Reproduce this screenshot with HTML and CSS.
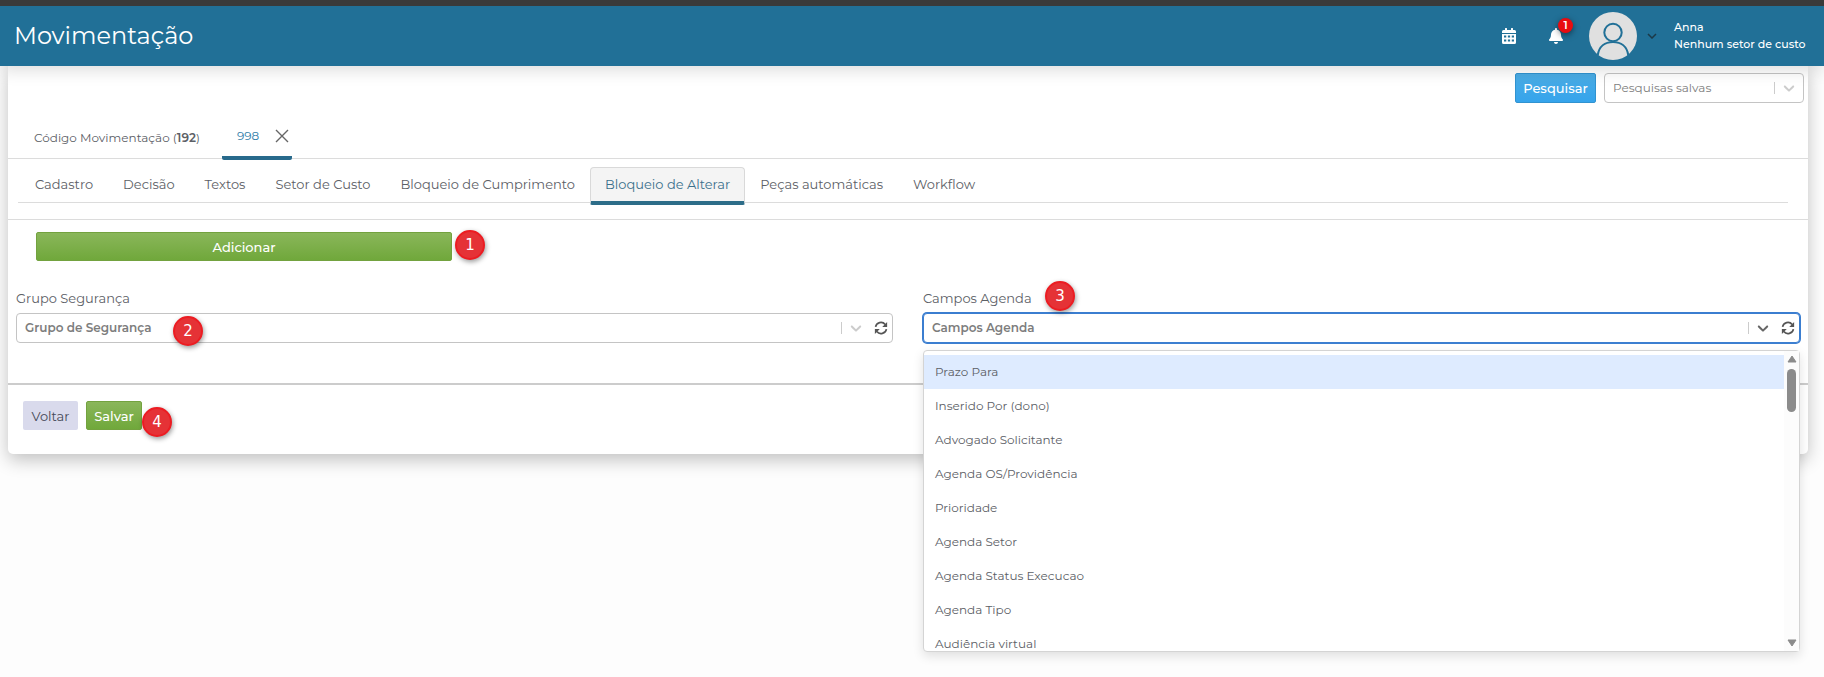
FILE: index.html
```html
<!DOCTYPE html>
<html lang="pt-BR">
<head>
<meta charset="utf-8">
<meta name="viewport" content="width=device-width, initial-scale=1">
<title>Movimentação</title>
<link rel="stylesheet" href="styles.css">
</head>
<body>
<svg class="sprite" aria-hidden="true">
  <symbol id="chevron" viewBox="0 0 20 20"><path d="M4.516 7.548c0.436-0.446 1.043-0.481 1.576 0l3.908 3.747 3.908-3.747c0.533-0.481 1.141-0.446 1.574 0 0.436 0.445 0.408 1.197 0 1.615-0.406 0.418-4.695 4.502-4.695 4.502-0.217 0.223-0.502 0.335-0.787 0.335s-0.57-0.112-0.789-0.335c0 0-4.287-4.084-4.695-4.502s-0.436-1.17 0-1.615z"/></symbol>
  <symbol id="refresh" viewBox="0 0 16 16"><path d="M1.800 6.800A6.200 6.200 0 0 1 12.800 4M14.200 9.200A6.200 6.200 0 0 1 3.200 12" fill="none" stroke="currentColor" stroke-width="1.900"/><path d="M15 1.200v5.600H9.400zM1 14.800V9.200h5.600z"/></symbol>
</svg>

<header class="topbar">
  <h1 class="title">Movimentação</h1>
  <div class="user-tools">
    <button class="icon-button" type="button" aria-label="Calendário">
      <svg width="14" height="16" viewBox="0 0 448 512"><path d="M0 192h448v272a48 48 0 0 1-48 48H48a48 48 0 0 1-48-48zM448 160H0v-48a48 48 0 0 1 48-48h48V16q0-16 16-16h32q16 0 16 16v48h128V16q0-16 16-16h32q16 0 16 16v48h48a48 48 0 0 1 48 48z"/><path class="cells" d="M64 240h72v64H64zM188 240h72v64h-72zM312 240h72v64h-72zM64 368h72v64H64zM188 368h72v64h-72zM312 368h72v64h-72z"/></svg>
    </button>
    <button class="icon-button bell" type="button" aria-label="Notificações">
      <svg width="14" height="16" viewBox="0 0 448 512"><path d="M224 512c35.320 0 63.970-28.650 63.970-64H160.030c0 35.350 28.650 64 63.970 64zm215.390-149.710c-19.320-20.760-55.470-51.990-55.470-154.290 0-77.700-54.480-139.900-127.940-155.160V32c0-17.670-14.320-32-31.980-32s-31.980 14.330-31.980 32v20.840C118.560 68.100 64.080 130.300 64.080 208c0 102.300-36.150 133.530-55.470 154.290-6 6.450-8.660 14.160-8.610 21.710.11 16.400 12.980 32 32.100 32h383.800c19.120 0 32-15.600 32.100-32 .05-7.550-2.610-15.270-8.610-21.710z"/></svg>
      <span class="count">1</span>
    </button>
    <button class="account" type="button" aria-label="Menu do usuário">
      <svg width="48" height="48" viewBox="0 0 48 48" fill="none"><circle cx="24" cy="24" r="24" fill="#e0e0e0"/><circle cx="24" cy="20.500" r="8.700" fill="none" stroke="#217097" stroke-width="2"/><path d="M8.800 43C10 34.500 16 30 24 30s14 4.500 15.200 13" fill="none" stroke="#217097" stroke-width="2"/></svg>
      <svg class="caret" width="10" height="6" viewBox="0 0 10 6"><path d="M1 1l4 4 4-4" fill="none" stroke="currentColor" stroke-width="1.500"/></svg>
    </button>
    <div class="who"><span>Anna</span><span>Nenhum setor de custo</span></div>
  </div>
</header>

<main class="card">
  <div class="search-bar">
    <button class="button primary" type="button">Pesquisar</button>
    <div class="picker saved">
      <select aria-label="Pesquisas salvas"><option>Pesquisas salvas</option></select>
      <span class="chevron"><svg width="18" height="18"><use href="#chevron"/></svg></span>
    </div>
  </div>

  <nav class="records">
    <a class="record" href="#lista">Código Movimentação (<b>192</b>)</a>
    <div class="record current">
      <a href="#998">998</a>
      <button class="close" type="button" aria-label="Fechar"><svg width="14" height="14" viewBox="0 0 14 14"><path d="M1 1l12 12M13 1L1 13" stroke="currentColor" stroke-width="1.400"/></svg></button>
    </div>
  </nav>

  <nav class="sections">
    <a href="#cadastro">Cadastro</a>
    <a href="#decisao">Decisão</a>
    <a href="#textos">Textos</a>
    <a href="#setor">Setor de Custo</a>
    <a href="#cumprimento">Bloqueio de Cumprimento</a>
    <a class="active" href="#alterar">Bloqueio de Alterar</a>
    <a href="#pecas">Peças automáticas</a>
    <a href="#workflow">Workflow</a>
  </nav>

  <form class="form">
    <div class="add-row">
      <button class="button success" type="button">Adicionar</button>
      <span class="step step-1">1</span>
    </div>
    <div class="fields">
      <div class="field">
        <label for="grupo">Grupo Segurança</label>
        <div class="picker">
          <select id="grupo"><option>Grupo de Segurança</option></select>
          <span class="chevron"><svg width="18" height="18"><use href="#chevron"/></svg></span>
          <button class="reload" type="button" aria-label="Atualizar grupos"><svg width="14" height="14"><use href="#refresh"/></svg></button>
        </div>
        <span class="step step-2">2</span>
      </div>
      <div class="field">
        <label for="campos">Campos Agenda</label>
        <div class="picker open">
          <select id="campos"><option>Campos Agenda</option></select>
          <span class="chevron"><svg width="18" height="18"><use href="#chevron"/></svg></span>
          <button class="reload" type="button" aria-label="Atualizar campos"><svg width="14" height="14"><use href="#refresh"/></svg></button>
        </div>
        <span class="step step-3">3</span>
        <div class="menu">
          <ul class="options" role="listbox" aria-label="Campos Agenda">
            <li class="focused" role="option">Prazo Para</li>
            <li role="option">Inserido Por (dono)</li>
            <li role="option">Advogado Solicitante</li>
            <li role="option">Agenda OS/Providência</li>
            <li role="option">Prioridade</li>
            <li role="option">Agenda Setor</li>
            <li role="option">Agenda Status Execucao</li>
            <li role="option">Agenda Tipo</li>
            <li role="option">Audiência virtual</li>
          </ul>
          <div class="scroller" aria-hidden="true">
            <svg width="10" height="8" viewBox="0 0 10 8"><path d="M5 1l4 6H1z" stroke="currentColor" stroke-linejoin="round"/></svg>
            <span class="thumb"></span>
            <svg width="10" height="8" viewBox="0 0 10 8"><path d="M5 7l4-6H1z" stroke="currentColor" stroke-linejoin="round"/></svg>
          </div>
        </div>
      </div>
    </div>
    <footer class="actions">
      <button class="button muted" type="button">Voltar</button>
      <div class="save">
        <button class="button success" type="submit">Salvar</button>
        <span class="step step-4">4</span>
      </div>
    </footer>
  </form>
</main>
</body>
</html>
```
FILE: styles.css
```css
* { box-sizing: border-box; }

body {
  min-height: 100vh;
  margin: 0;
  background: #fdfdfd;
  color: #5c6066;
  font: 13px/20px Montserrat, Inter, "Open Sans", sans-serif;
}

button, select { font: inherit; color: inherit; }
button { border: 0; padding: 0; background: none; cursor: pointer; }
a { color: inherit; text-decoration: none; }
svg { display: block; fill: currentColor; }
.sprite { position: absolute; width: 0; height: 0; }

.topbar {
  position: relative;
  z-index: 2;
  display: flex;
  align-items: center;
  justify-content: space-between;
  height: 66px;
  padding: 0 20px 0 14px;
  border-top: 6px solid #3a3a3a;
  background: #217097;
  color: #fff;
  box-shadow: 0 4px 16px rgba(0, 0, 0, 0.14);
}
.title { margin: 0; font-size: 24px; line-height: 32px; font-weight: 400; }
.user-tools { display: flex; align-items: center; }
.icon-button { position: relative; margin-right: 33px; }
.cells { fill: #217097; }
.bell { margin-right: 26px; }
.count {
  position: absolute;
  top: -10px;
  left: 9px;
  width: 15px;
  height: 15px;
  border-radius: 50%;
  background: #e80c10;
  box-shadow: 0 2px 6px rgba(0, 0, 0, 0.5);
  font-size: 11px;
  line-height: 15px;
  font-weight: 600;
}
.account { display: flex; align-items: center; gap: 10px; margin-right: 17px; }
.caret { color: #1c3947; }
.who { display: flex; flex-direction: column; width: 130px; font-size: 11px; line-height: 17px; font-weight: 500; white-space: nowrap; }

.card {
  margin: 0 16px 40px 8px;
  border-radius: 0 0 5px 5px;
  background: #fff;
  box-shadow: 0 6px 18px rgba(0, 0, 0, 0.24);
}
.search-bar { display: flex; justify-content: flex-end; gap: 8px; padding: 7px 4px 0 0; }

.button {
  height: 29px;
  padding: 0 8px;
  border: 1px solid transparent;
  border-radius: 2px;
  line-height: 24px;
  font-weight: 500;
}
.primary { width: 81px; height: 30px; padding: 0; border-color: #3193d0; background: linear-gradient(#4bace4, #35a4ec); color: #fff; }
.success { border-color: #73a23f; background: linear-gradient(#8ab65a, #70a83b); color: #fff; }
.muted { width: 55px; background: #d9daec; color: #454956; font-weight: 400; }

.picker {
  display: flex;
  align-items: center;
  height: 30px;
  padding-right: 4px;
  border: 1px solid #c4c4c4;
  border-radius: 4px;
  background: #fff;
}
.picker select {
  flex: 1;
  min-width: 0;
  height: 100%;
  padding: 0 8px;
  border: 0;
  outline: 0;
  appearance: none;
  background: none;
  color: #7d7d7d;
  font-size: 12px;
  font-weight: 600;
}
.chevron { display: flex; align-items: center; width: 29px; height: 12px; padding-left: 5px; border-left: 1px solid #ccc; color: #ccc; }
.reload { margin-left: 4px; color: #555; }
.saved { width: 200px; padding-right: 0; }
.saved select { font-weight: 400; }
.open { border-color: #3b7ed0; box-shadow: 0 0 0 1px #3b7ed0; }
.open .chevron svg { color: #666; }

.records { display: flex; align-items: flex-end; height: 56px; border-bottom: 1px solid #dcdcdc; font-size: 12px; }
.record { width: 188px; padding: 0 0 10px 26px; white-space: nowrap; }
.record b { font-weight: 600; }
.current {
  display: flex;
  align-items: center;
  justify-content: space-between;
  width: 70px;
  margin: 0 0 -2px 26px;
  padding: 0 3px 10px 15px;
  border-bottom: 4px solid #286a8c;
  border-radius: 2px;
  color: #307da8;
}
.close { color: #666; }

.sections {
  display: flex;
  margin: 8px 20px 16px 10px;
  padding-left: 2px;
  border-bottom: 1px solid #dcdcdc;
}
.sections a {
  height: 38px;
  margin-bottom: -3px;
  padding: 6px 14px;
  border: 1px solid transparent;
  border-radius: 4px 4px 2px 2px;
  white-space: nowrap;
}
.sections .active { border-color: #d9d9d9; border-bottom: 4px solid #2d6d89; background: #f4f4f4; color: #3b708c; }

.form { border-top: 1px solid #dcdcdc; }
.add-row { display: flex; padding: 12px 28px; }
.add-row .button { width: 416px; }
.fields { display: grid; grid-template-columns: 1fr 1fr; gap: 30px; padding: 15px 8px 40px; }
.field { position: relative; }
.field label { display: block; margin-bottom: 5px; }

.actions { display: flex; gap: 8px; padding: 16px 15px 24px; border-top: 2px solid #ccc; }
.actions .button { display: block; padding: 0; }
.actions .success { width: 56px; }

.menu {
  position: absolute;
  z-index: 1;
  top: 62px;
  left: 0;
  right: 0;
  display: flex;
  height: 302px;
  padding: 0;
  border: 1px solid #d4d4d4;
  border-radius: 4px;
  background: #fff;
  box-shadow: 0 4px 11px rgba(0, 0, 0, 0.12);
}
.options { flex: 1; margin: 0; padding: 4px 0 0; overflow: hidden; list-style: none; font-size: 12px; }
.options li { height: 34px; padding: 7px 11px; }
.focused { background: #deebff; }
.scroller { display: flex; flex-direction: column; align-items: center; gap: 6px; width: 15px; padding: 4px 0; background: #fcfcfc; color: #8b8b8b; }
.thumb { width: 9px; height: 43px; margin-bottom: auto; border-radius: 5px; background: #8b8b8b; }

.add-row, .save { position: relative; }
.step {
  position: absolute;
  z-index: 2;
  width: 30px;
  height: 30px;
  border: 2px solid #ec1c22;
  border-radius: 50%;
  background: #e53236;
  box-shadow: 1px 2px 5px rgba(0, 0, 0, 0.4);
  color: #fff;
  font: 15px/26px "DejaVu Sans", sans-serif;
  text-align: center;
}
.step-1 { top: 10px; left: 447px; }
.step-2 { top: 28px; left: 157px; }
.step-3 { top: -7px; left: 122px; }
.step-4 { top: 6px; left: 56px; }
```
